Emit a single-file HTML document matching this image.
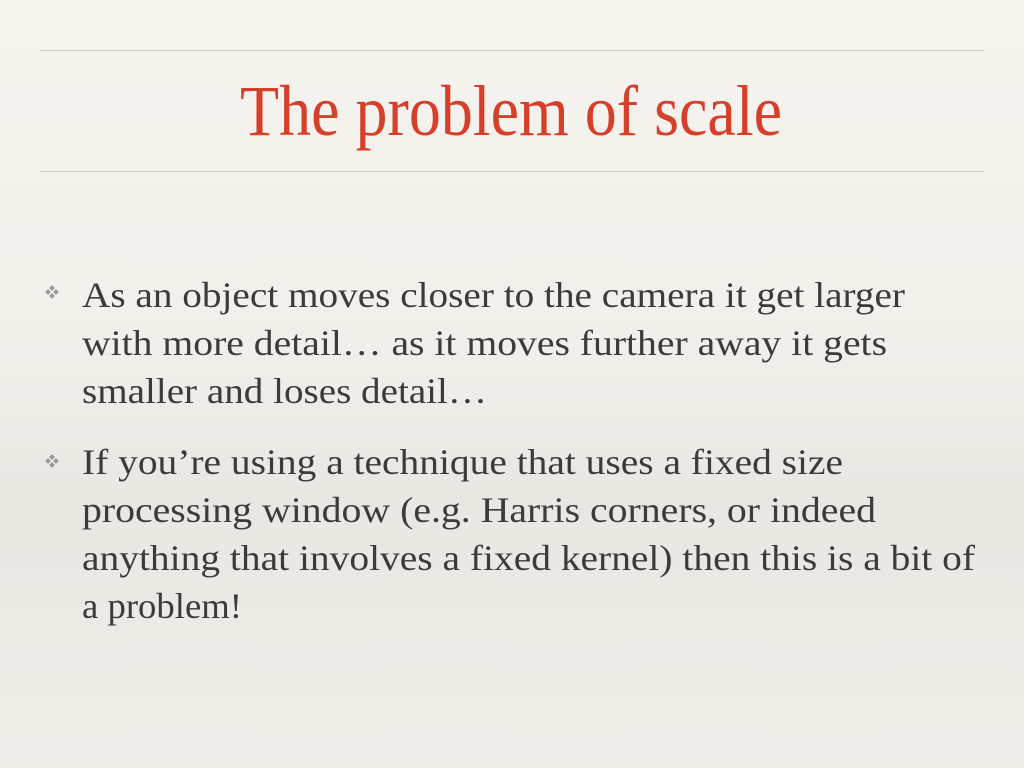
<!DOCTYPE html>
<html><head><meta charset="utf-8"><style>
html,body{margin:0;padding:0}
body{width:1024px;height:768px;overflow:hidden;background:linear-gradient(180deg,#f6f4ef 0%,#f1efea 45%,#e9e7e2 65%,#efede8 100%)}
svg{display:block}
</style></head><body>
<svg width="1024" height="768" xmlns="http://www.w3.org/2000/svg">
<line x1="40" y1="50.5" x2="984" y2="50.5" stroke="#cfccc6" stroke-width="1"/>
<line x1="40" y1="171.5" x2="984" y2="171.5" stroke="#cfccc6" stroke-width="1"/>
<text x="240" y="135" font-family="Liberation Serif, serif" font-size="72" fill="#d6402b" textLength="542" lengthAdjust="spacingAndGlyphs">The problem of scale</text>
<g font-family="Liberation Serif, serif" font-size="36" fill="#3d3b39">
<text x="82" y="307" textLength="823" lengthAdjust="spacingAndGlyphs">As an object moves closer to the camera it get larger</text>
<text x="82" y="355" textLength="805" lengthAdjust="spacingAndGlyphs">with more detail… as it moves further away it gets</text>
<text x="82" y="403" textLength="405" lengthAdjust="spacingAndGlyphs">smaller and loses detail…</text>
<text x="82" y="474" textLength="761" lengthAdjust="spacingAndGlyphs">If you’re using a technique that uses a fixed size</text>
<text x="82" y="522" textLength="794" lengthAdjust="spacingAndGlyphs">processing window (e.g. Harris corners, or indeed</text>
<text x="82" y="570" textLength="893" lengthAdjust="spacingAndGlyphs">anything that involves a fixed kernel) then this is a bit of</text>
<text x="82" y="618" textLength="160" lengthAdjust="spacingAndGlyphs">a problem!</text>
</g>
<g fill="#9a9894">
<g transform="translate(52,292)"><rect x="-2" y="-6" width="4" height="4" transform="rotate(45 0 -4)"/><rect x="-2" y="2" width="4" height="4" transform="rotate(45 0 4)"/><rect x="-6" y="-2" width="4" height="4" transform="rotate(45 -4 0)"/><rect x="2" y="-2" width="4" height="4" transform="rotate(45 4 0)"/></g>
<g transform="translate(52,461)"><rect x="-2" y="-6" width="4" height="4" transform="rotate(45 0 -4)"/><rect x="-2" y="2" width="4" height="4" transform="rotate(45 0 4)"/><rect x="-6" y="-2" width="4" height="4" transform="rotate(45 -4 0)"/><rect x="2" y="-2" width="4" height="4" transform="rotate(45 4 0)"/></g>
</g>
</svg>
</body></html>
